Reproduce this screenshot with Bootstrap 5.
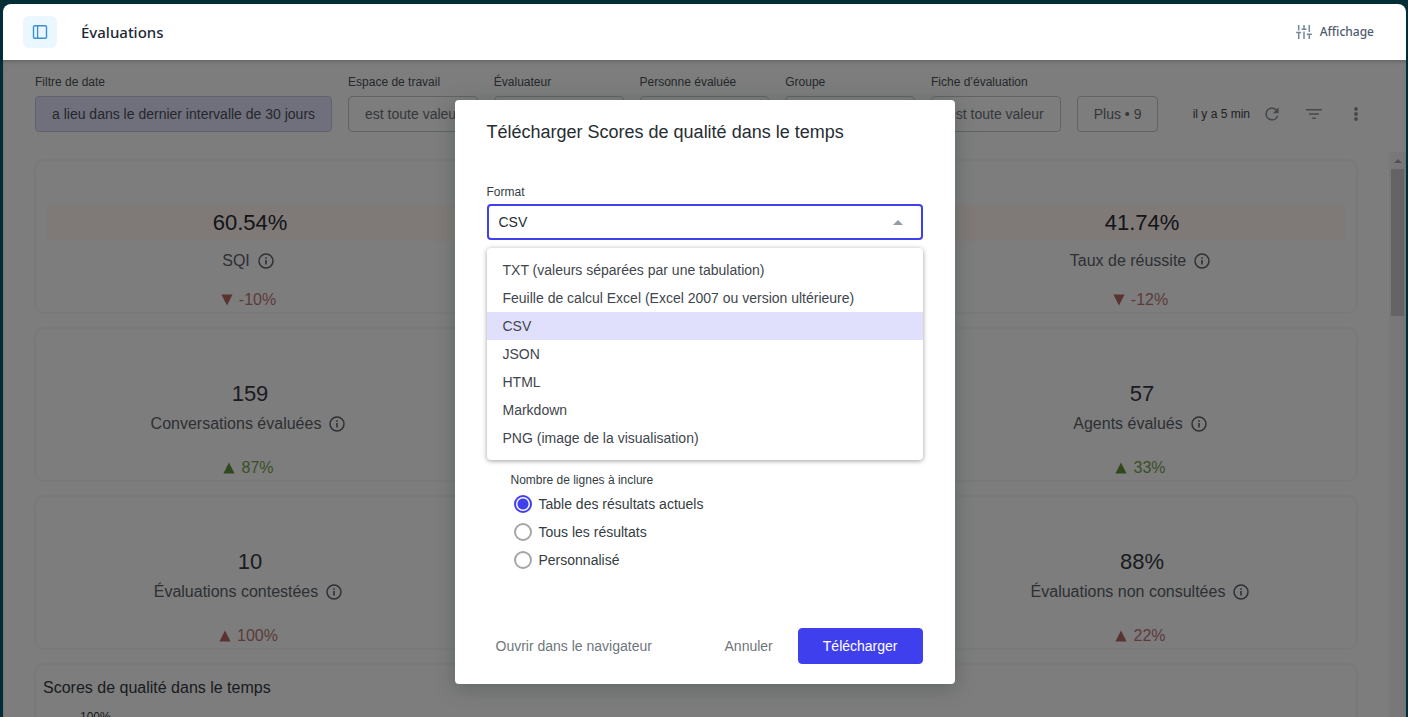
<!DOCTYPE html>
<html lang="fr">
<head>
<meta charset="utf-8">
<meta name="viewport" content="width=device-width, initial-scale=1">
<title>Évaluations</title>
<link rel="stylesheet" href="https://cdn.jsdelivr.net/npm/bootstrap@5.3.0/dist/css/bootstrap.min.css">
<style>
  body { background: #012d36; font-family: "Liberation Sans", Arial, sans-serif; font-size: 14px; line-height: 20px; color: #343c42; }
  .app-shell { padding: 4px 2px 0 3px; }
  .topbar { height: 56px; padding: 0 32px 0 20px; background: #fff; border-radius: 8px 8px 0 0; font-family: "Noto Sans", "Open Sans", sans-serif; font-weight: 500; }
  .topbar h1 { font-size: 15px; line-height: 24px; font-weight: 500; color: #1d2733; }
  .side-toggle { width: 34px; height: 32px; border-radius: 6px; background: #ebf7ff; color: #3b8fd0; }
  .display-btn { font-size: 12px; line-height: 20px; font-weight: 500; color: #4c5b70; }
  .display-btn svg { color: #75869c; }
  .board { background: #fbfbfb; }
  .veil { background: rgba(0, 0, 0, .5); box-shadow: inset 0 3px 4px -2px rgba(0, 0, 0, .25); }
  .filters { padding: 14px 38px 20px 32px; gap: 16px; }
  .filter-name { font-size: 12px; line-height: 16px; margin-bottom: 6px; color: #4a5258; }
  .chip { height: 36px; padding: 0 16px; border: 1px solid #c1c6cc; border-radius: 4px; background: transparent; color: #6a7076; white-space: nowrap; }
  .chip-on { background: #e1e0fa; border-color: #c4c4d8; color: #4a4f58; }
  .tool-icons { height: 36px; gap: 18px; color: #8c9298; }
  .tool-icons button { width: 24px; height: 24px; color: inherit; }
  .updated { font-size: 12px; color: #40444a; margin-right: -8px; }
  .tiles { padding: 7px 31px 0; }
  .tiles .row { --bs-gutter-x: 14px; --bs-gutter-y: 13px; margin-top: 0; }
  .tiles .row > * { margin-top: 0; margin-bottom: 13px; }
  .tiles .col-12 { padding: 0 7px; }
  .tile { height: 155px; padding: 0 11px; border: 2px solid #f2f3f4; border-radius: 10px; font-size: 16px; line-height: 24px; color: #5a6068; text-align: center; }
  .tile-value { font-size: 24px; line-height: 36px; color: #343842; }
  .tile-name { margin-bottom: 20px; padding-right: 4px; }
  .tile-alert .tile-value { background: #fff3f1; color: #262a30; margin-bottom: 8px; }
  .tile-alert .tile-value, .tile-value { font-size: 22px; }
  .tile-alert .tile-name { margin-bottom: 15px; }
  .delta { display: flex; align-items: center; justify-content: center; gap: 6px; padding-right: 3px; }
  .down { color: #b87676; } .up { color: #76a050; }
  .down svg { color: #b06660; } .up svg { color: #639038; }
  .trend-tile { height: 400px; text-align: left; padding: 11px 7px; color: #343842; }
  .axis { font-size: 12px; line-height: 16px; padding: 9px 0 0 37px; color: #343842; }
  .rail { width: 17px; background: #f1f1f1; padding: 0 2px; }
  .rail-cap { height: 17px; color: #a3a3a3; }
  .rail-thumb { height: 147px; background: #c9c9c9; }
  .dialog-wrap { padding-top: 40px; }
  .dialog { width: 500px; max-width: 100%; padding: 20px 32px; border-radius: 4px; background: #fff; box-shadow: 0 4px 20px rgba(50, 70, 60, .4); }
  .dialog h2 { font-size: 18px; line-height: 24px; font-weight: 400; color: #262d33; margin-bottom: 40px; }
  .field-name { font-size: 12px; line-height: 16px; color: #343c42; }
  .format-field { height: 36px; padding: 0 36px 0 10px; border: 2px solid #403fee; border-radius: 4px; font-size: 14px; line-height: 20px; color: #262d33; background: #fff; appearance: none; }
  .caret { right: 20px; color: #939ba5; }
  .format-menu { top: 44px; left: 0; width: 100%; padding: 8px 0; border: 0; border-radius: 4px; font-size: 14px; box-shadow: 0 1px 5px rgba(0, 0, 0, .38); }
  .format-menu .dropdown-item { padding: 4px 16px; line-height: 20px; color: #3f464d; }
  .format-menu .dropdown-item.active { background: #e0dffc; color: #3f464d; }
  .lines { padding: 232px 24px 54px; }
  .pick { height: 28px; padding: 0 0 0 3px; gap: 7px; color: #343c42; }
  .lines .pick .form-check-input { width: 18px; height: 18px; margin: 0; border: 2px solid #a6a6a6; float: none; flex: none; }
  .lines .pick .form-check-input:checked { background: radial-gradient(circle, #403fee 5px, #fff 6px); border-color: #403fee; }
  .lines .field-name { margin-bottom: 2px; }
  .dlg-btn { height: 36px; padding: 0 8px; font-size: 14px; line-height: 20px; border-radius: 4px; color: #70767c; }
  .dlg-main, .dlg-main:hover { padding: 0 24px; background: #403fee; border-color: #403fee; color: #fff; }
</style>
</head>
<body>
<svg class="d-none" aria-hidden="true">
  <symbol id="info" viewBox="0 0 16 16"><circle cx="8" cy="8" r="7" fill="none" stroke="currentColor" stroke-width="1.5"/><path d="M8 7v4.5M8 4.2v1.6" stroke="currentColor" stroke-width="1.6"/></symbol>
  <symbol id="tri-down" viewBox="0 0 12 12"><path d="M.4.5h11.2L6 11.5z" fill="currentColor"/></symbol>
  <symbol id="tri-up" viewBox="0 0 12 12"><path d="M.4 11.5h11.2L6 .5z" fill="currentColor"/></symbol>
</svg>
<div class="app-shell vh-100 d-flex flex-column overflow-hidden">
  <header class="topbar d-flex align-items-center flex-shrink-0">
    <button class="btn side-toggle border-0 p-0 d-flex align-items-center justify-content-center" aria-label="Menu">
      <svg width="16" height="16" viewBox="0 0 16 16" fill="none" stroke="currentColor" stroke-width="1.4"><rect x="1.5" y="1.7" width="13" height="12.6" rx="1.2"/><path d="M5.6 1.7v12.6"/></svg>
    </button>
    <h1 class="mb-0 ms-4">Évaluations</h1>
    <button class="btn display-btn border-0 p-0 ms-auto d-flex align-items-center gap-2">
      <svg width="16" height="16" viewBox="0 0 16 16" fill="none" stroke="currentColor" stroke-width="1.5"><path d="M2.7 1v5.5M2.7 9v6M.2 8.6h5M8 1v3.5M8 7.5V15M5.5 5.2h5M13.3 1v7M13.3 11v4M10.8 10.3h5"/></svg>
      Affichage
    </button>
  </header>

  <main class="board position-relative flex-fill d-flex flex-column overflow-hidden">
    <div class="filters d-flex align-items-end">
      <div><div class="filter-name">Filtre de date</div><button class="chip chip-on">a lieu dans le dernier intervalle de 30 jours</button></div>
      <div><div class="filter-name">Espace de travail</div><button class="chip">est toute valeur</button></div>
      <div><div class="filter-name">Évaluateur</div><button class="chip">est toute valeur</button></div>
      <div><div class="filter-name">Personne évaluée</div><button class="chip">est toute valeur</button></div>
      <div><div class="filter-name">Groupe</div><button class="chip">est toute valeur</button></div>
      <div><div class="filter-name">Fiche d’évaluation</div><button class="chip">est toute valeur</button></div>
      <button class="chip">Plus • 9</button>
      <div class="tool-icons d-flex align-items-center ms-auto">
        <span class="updated">il y a 5 min</span>
        <button class="btn border-0 p-0 d-flex align-items-center" aria-label="Actualiser"><svg width="20" height="20" viewBox="0 0 24 24" fill="currentColor" class="m-auto"><path d="M17.65 6.35A7.96 7.96 0 0 0 12 4a8 8 0 1 0 7.73 10h-2.08A6 6 0 1 1 12 6c1.66 0 3.14.69 4.22 1.78L13 11h7V4z"/></svg></button>
        <button class="btn border-0 p-0 d-flex align-items-center" aria-label="Filtres"><svg width="20" height="20" viewBox="0 0 20 20" fill="currentColor" class="m-auto"><path d="M2 5h16v1.6H2zM5 9.2h10v1.6H5zM8.2 13.4h3.6V15H8.2z"/></svg></button>
        <button class="btn border-0 p-0 d-flex align-items-center" aria-label="Plus d’actions"><svg width="20" height="20" viewBox="0 0 20 20" fill="currentColor" class="m-auto"><circle cx="10" cy="5" r="1.9"/><circle cx="10" cy="10" r="1.9"/><circle cx="10" cy="15" r="1.9"/></svg></button>
      </div>
    </div>

    <div class="d-flex flex-fill overflow-hidden">
      <div class="tiles flex-fill overflow-hidden">
        <div class="row">
          <div class="col-4"><div class="tile tile-alert d-flex flex-column justify-content-end">
            <div class="tile-value">60.54%</div>
            <div class="tile-name d-flex justify-content-center align-items-center gap-2">SQI <svg width="16" height="16"><use href="#info"/></svg></div>
            <div class="delta down"><svg width="12" height="12"><use href="#tri-down"/></svg>-10%</div>
          </div></div>
          <div class="col-4"><div class="tile"></div></div>
          <div class="col-4"><div class="tile tile-alert d-flex flex-column justify-content-end">
            <div class="tile-value">41.74%</div>
            <div class="tile-name d-flex justify-content-center align-items-center gap-2">Taux de réussite <svg width="16" height="16"><use href="#info"/></svg></div>
            <div class="delta down"><svg width="12" height="12"><use href="#tri-down"/></svg>-12%</div>
          </div></div>
          <div class="col-4"><div class="tile d-flex flex-column justify-content-end">
            <div class="tile-value">159</div>
            <div class="tile-name d-flex justify-content-center align-items-center gap-2">Conversations évaluées <svg width="16" height="16"><use href="#info"/></svg></div>
            <div class="delta up"><svg width="12" height="12"><use href="#tri-up"/></svg>87%</div>
          </div></div>
          <div class="col-4"><div class="tile"></div></div>
          <div class="col-4"><div class="tile d-flex flex-column justify-content-end">
            <div class="tile-value">57</div>
            <div class="tile-name d-flex justify-content-center align-items-center gap-2">Agents évalués <svg width="16" height="16"><use href="#info"/></svg></div>
            <div class="delta up"><svg width="12" height="12"><use href="#tri-up"/></svg>33%</div>
          </div></div>
          <div class="col-4"><div class="tile d-flex flex-column justify-content-end">
            <div class="tile-value">10</div>
            <div class="tile-name d-flex justify-content-center align-items-center gap-2">Évaluations contestées <svg width="16" height="16"><use href="#info"/></svg></div>
            <div class="delta down"><svg width="12" height="12"><use href="#tri-up"/></svg>100%</div>
          </div></div>
          <div class="col-4"><div class="tile"></div></div>
          <div class="col-4"><div class="tile d-flex flex-column justify-content-end">
            <div class="tile-value">88%</div>
            <div class="tile-name d-flex justify-content-center align-items-center gap-2">Évaluations non consultées <svg width="16" height="16"><use href="#info"/></svg></div>
            <div class="delta down"><svg width="12" height="12"><use href="#tri-up"/></svg>22%</div>
          </div></div>
          <div class="col-12"><div class="tile trend-tile">
            <div>Scores de qualité dans le temps</div>
            <div class="axis">100%</div>
          </div></div>
        </div>
      </div>
      <div class="rail flex-shrink-0" aria-hidden="true">
        <div class="rail-cap d-flex align-items-center justify-content-center"><svg width="8" height="4" viewBox="0 0 8 4"><path d="M0 4l4-4 4 4z" fill="currentColor"/></svg></div>
        <div class="rail-thumb"></div>
      </div>
    </div>

    <div class="veil position-absolute top-0 start-0 w-100 h-100"></div>

    <div class="dialog-wrap position-absolute top-0 start-0 w-100 d-flex justify-content-center">
      <form class="dialog" role="dialog" aria-labelledby="dlg-title">
        <h2 id="dlg-title">Télécharger Scores de qualité dans le temps</h2>
        <label class="field-name d-block mb-1" for="format">Format</label>
        <div class="position-relative d-flex align-items-center">
          <select id="format" class="format-field w-100"><option>CSV</option></select>
          <svg class="caret position-absolute" width="10" height="5" viewBox="0 0 10 5"><path d="M0 5l5-5 5 5z" fill="currentColor"/></svg>
          <div class="dropdown-menu show format-menu">
            <button type="button" class="dropdown-item">TXT (valeurs séparées par une tabulation)</button>
            <button type="button" class="dropdown-item">Feuille de calcul Excel (Excel 2007 ou version ultérieure)</button>
            <button type="button" class="dropdown-item active">CSV</button>
            <button type="button" class="dropdown-item">JSON</button>
            <button type="button" class="dropdown-item">HTML</button>
            <button type="button" class="dropdown-item">Markdown</button>
            <button type="button" class="dropdown-item">PNG (image de la visualisation)</button>
          </div>
        </div>
        <div class="lines" role="radiogroup" aria-labelledby="lines-name">
          <div class="field-name" id="lines-name">Nombre de lignes à inclure</div>
          <div class="form-check pick d-flex align-items-center m-0"><input class="form-check-input" type="radio" name="lines" id="l1" checked><label for="l1">Table des résultats actuels</label></div>
          <div class="form-check pick d-flex align-items-center m-0"><input class="form-check-input" type="radio" name="lines" id="l2"><label for="l2">Tous les résultats</label></div>
          <div class="form-check pick d-flex align-items-center m-0"><input class="form-check-input" type="radio" name="lines" id="l3"><label for="l3">Personnalisé</label></div>
        </div>
        <div class="d-flex align-items-center gap-3">
          <button type="button" class="btn dlg-btn me-auto">Ouvrir dans le navigateur</button>
          <button type="button" class="btn dlg-btn">Annuler</button>
          <button type="button" class="btn dlg-btn dlg-main">Télécharger</button>
        </div>
      </form>
    </div>
  </main>
</div>
<script src="https://cdn.jsdelivr.net/npm/bootstrap@5.3.0/dist/js/bootstrap.bundle.min.js"></script>
</body>
</html>
